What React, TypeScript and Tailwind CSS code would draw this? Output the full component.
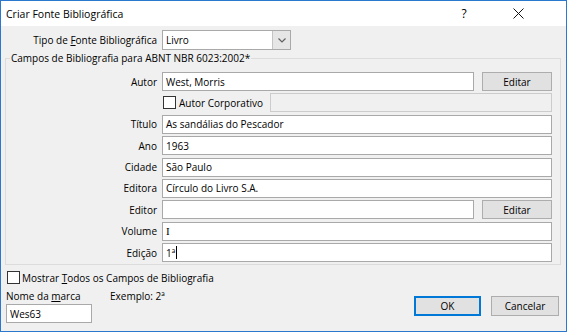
import React from 'react';

// Text box look used by all the fields
const Box = ({ value, disabled, caret, className = '' }: { value?: React.ReactNode; disabled?: boolean; caret?: boolean; className?: string }) => (
    <div
        className={`h-[19px] flex items-center pl-[3px] border whitespace-nowrap overflow-hidden ${disabled ? 'bg-[#f0f0f0] border-[#cccccc]' : 'bg-white border-[#a9a9a9]'} ${className}`}
    >
        {value}
        {caret && <span className="inline-block w-[1px] h-[13px] bg-black ml-[1px]"></span>}
    </div>
);

const WinButton = ({ label, primary, className = '' }: { label: string; primary?: boolean; className?: string }) => (
    <div
        className={`flex items-center justify-center bg-[#e1e1e1] border ${primary ? 'border-[#0078d7] shadow-[inset_0_0_0_1px_#0078d7]' : 'border-[#adadad]'} ${className}`}
    >
        {label}
    </div>
);

const CheckBox = () => <div className="w-[13px] h-[13px] bg-white border border-[#333333] shrink-0"></div>;

// One labelled line inside the group box
const Row = ({ label, children }: { label: string; children: React.ReactNode }) => (
    <div className="flex items-center h-[19px]">
        <span className="w-[151px] text-right shrink-0">{label}</span>
        <div className="ml-[5px] flex-1 flex items-center">{children}</div>
    </div>
);

export default function App() {
    return (
        <div className="w-[567px] h-[332px] flex flex-col border border-[#2b79cf] bg-[#f0f0f0] text-[10px] leading-[14px] text-black font-['Open_Sans',sans-serif] overflow-hidden select-none">
            {/* Title bar */}
            <div className="h-[25px] bg-white flex items-center shrink-0">
                <span className="pl-[5px] text-[10.5px]">Criar Fonte Bibliográfica</span>
                <span className="ml-auto w-[46px] text-center text-[12px]">?</span>
                <div className="ml-[8px] w-[46px] mr-[25px] flex justify-center">
                    <svg width="11" height="11" viewBox="0 0 11 11">
                        <path d="M0.5 0.5 L10.5 10.5 M10.5 0.5 L0.5 10.5" stroke="#111" strokeWidth="1" />
                    </svg>
                </div>
            </div>

            {/* Tipo de fonte */}
            <div className="flex items-center mt-[4px] h-[20px]">
                <span className="w-[156px] text-right">
                    Tipo de <span className="underline">F</span>onte Bibliográfica
                </span>
                <div className="ml-[5px] w-[129px] h-[20px] flex items-center bg-white border border-[#a9a9a9]">
                    <span className="pl-[3px] flex-1">Livro</span>
                    <div className="w-[18px] h-[18px] bg-[#e6e6e6] border-l border-[#c4c4c4] flex items-center justify-center">
                        <svg width="8" height="5" viewBox="0 0 8 5">
                            <path d="M0.5 0.5 L4 4 L7.5 0.5" stroke="#606060" strokeWidth="1.2" fill="none" />
                        </svg>
                    </div>
                </div>
            </div>

            {/* Campos */}
            <fieldset className="mt-[1px] ml-[4px] mr-[5px] border border-[#dcdcdc] pt-[7px] pb-[2px] pr-[8px]">
                <legend className="ml-[4px] px-[1px]">Campos de Bibliografia para ABNT NBR 6023:2002*</legend>
                <div className="flex flex-col gap-[2.4px]">
                    <Row label="Autor">
                        <Box value="West, Morris" className="flex-1" />
                        <WinButton label="Editar" className="ml-[8px] w-[70px] h-[19px]" />
                    </Row>
                    <div className="flex items-center h-[19px]">
                        <div className="ml-[157px] w-[107px] flex items-center">
                            <CheckBox />
                            <span className="ml-[3px]">Autor Corporativo</span>
                        </div>
                        <Box disabled className="flex-1" />
                    </div>
                    <Row label="Título">
                        <Box value="As sandálias do Pescador" className="flex-1" />
                    </Row>
                    <Row label="Ano">
                        <Box value="1963" className="flex-1" />
                    </Row>
                    <Row label="Cidade">
                        <Box value="São Paulo" className="flex-1" />
                    </Row>
                    <Row label="Editora">
                        <Box value="Círculo do Livro S.A." className="flex-1" />
                    </Row>
                    <Row label="Editor">
                        <Box className="flex-1" />
                        <WinButton label="Editar" className="ml-[8px] w-[70px] h-[19px]" />
                    </Row>
                    <Row label="Volume">
                        <Box value={<span className="font-['Liberation_Serif',serif] text-[11px]">I</span>} className="flex-1" />
                    </Row>
                    <Row label="Edição">
                        <Box value="1ª" caret className="flex-1" />
                    </Row>
                </div>
            </fieldset>

            {/* Bottom */}
            <div className="flex items-center mt-[6px] h-[13px] pl-[6px]">
                <CheckBox />
                <span className="ml-[2px]">
                    Mostrar <span className="underline">T</span>odos os Campos de Bibliografia
                </span>
            </div>
            <div className="flex mt-[6px]">
                <div className="flex flex-col pl-[5px]">
                    <div className="flex h-[12px] items-center">
                        <span className="w-[104px]">
                            Nome da <span className="underline">m</span>arca
                        </span>
                        <span>Exemplo: 2ª</span>
                    </div>
                    <Box value="Wes63" className="mt-[2px] w-[86px]" />
                </div>
                <div className="ml-auto mr-[7px] mt-[6px] flex gap-[10px]">
                    <WinButton label="OK" primary className="w-[67px] h-[20px]" />
                    <WinButton label="Cancelar" className="w-[68px] h-[20px]" />
                </div>
            </div>
        </div>
    );
}
